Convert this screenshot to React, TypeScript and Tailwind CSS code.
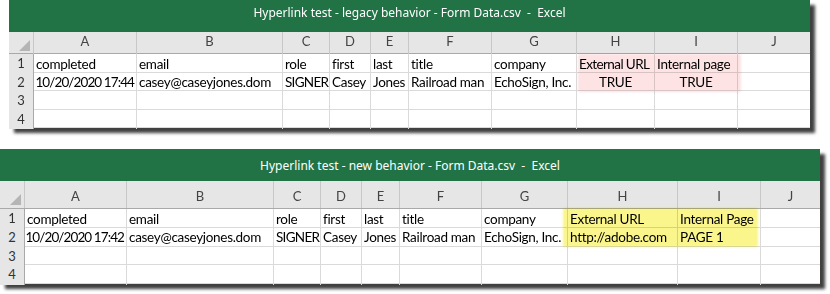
import React from 'react'

type Cell = { text?: string; align?: 'left' | 'right' | 'center'; track?: string }

type SheetProps = {
  title: string
  titleTop: string
  rowNumWidth: number
  widths: number[]
  headerClass: string
  rowHeight: number
  rows: Cell[][]
  highlight: { left: number; top: number; width: number; height: number; color: string }
  className: string
}

const LETTERS = ['A', 'B', 'C', 'D', 'E', 'F', 'G', 'H', 'I', 'J']

function SheetWindow({
  title,
  titleTop,
  rowNumWidth,
  widths,
  headerClass,
  rowHeight,
  rows,
  highlight,
  className,
}: SheetProps) {
  const cols = `${rowNumWidth}px ${widths.map((w) => `${w}px`).join(' ')} 1fr`

  return (
    <div className={`relative bg-white shadow-[5px_5px_3px_rgba(0,0,0,0.75)] ${className}`}>
      {/* title bar */}
      <div className={`h-[32px] bg-[#217346] flex justify-center text-white text-[12px] font-['Noto_Sans',sans-serif] whitespace-pre ${titleTop}`}>
        {title}
      </div>

      <div className="relative font-['Lato',sans-serif]">
        {/* column letters */}
        <div
          className={`grid bg-[#e6e6e6] border-b border-[#a9a9a9] text-[13px] text-[#444] ${headerClass}`}
          style={{ gridTemplateColumns: cols }}
        >
          <div className="relative border-r border-[#c8c8c8]">
            <svg className="absolute right-[3px] bottom-[3px]" width="11" height="11" viewBox="0 0 11 11">
              <path d="M11 0 L11 11 L0 11 Z" fill="#b5b5b5" />
            </svg>
          </div>
          {LETTERS.map((l) => (
            <div key={l} className="flex items-end justify-center pb-[2px] border-r border-[#c8c8c8] last:border-r-0">
              {l}
            </div>
          ))}
        </div>

        {/* rows */}
        {rows.map((row, r) => (
          <div
            key={r}
            className="grid text-[13.5px] text-black border-b border-[#dadada] last:border-b-0"
            style={{ gridTemplateColumns: cols, height: rowHeight }}
          >
            <div className="flex items-center justify-center bg-[#e6e6e6] border-r border-[#a9a9a9] text-[13px] text-[#333]">
              {r + 1}
            </div>
            {LETTERS.map((l, c) => {
              const cell = row[c] ?? {}
              const align =
                cell.align === 'right' ? 'justify-end' : cell.align === 'center' ? 'justify-center' : 'justify-start'
              return (
                <div
                  key={l}
                  className={`flex items-center ${align} px-[2px] border-r border-[#dadada] last:border-r-0 whitespace-nowrap overflow-hidden ${
                    cell.track ?? 'tracking-[-0.3px]'
                  }`}
                >
                  {cell.text}
                </div>
              )
            })}
          </div>
        ))}

        {/* highlighted cells */}
        <div
          className="absolute mix-blend-multiply rounded-[2px] blur-[1px]"
          style={{
            left: highlight.left,
            top: highlight.top,
            width: highlight.width,
            height: highlight.height,
            backgroundColor: highlight.color,
          }}
        />
      </div>
    </div>
  )
}

const baseRow = (date: string): Cell[] => [
  { text: date, align: 'right', track: 'tracking-[-0.9px]' },
  { text: 'casey@caseyjones.dom' },
  { text: 'SIGNER', track: 'tracking-[-0.7px]' },
  { text: 'Casey' },
  { text: 'Jones' },
  { text: 'Railroad man' },
  { text: 'EchoSign, Inc.' },
]

const header: Cell[] = [
  { text: 'completed' },
  { text: 'email' },
  { text: 'role' },
  { text: 'first' },
  { text: 'last' },
  { text: 'title' },
  { text: 'company' },
]

export default function App() {
  return (
    <div className="w-[830px] h-[294px] bg-white overflow-hidden flex flex-col">
      <SheetWindow
        className="ml-[9px] w-[801px] h-[128px]"
        title="Hyperlink test - legacy behavior - Form Data.csv  -  Excel"
        titleTop="pt-[4px]"
        rowNumWidth={25}
        widths={[103, 146, 47, 41, 38, 83, 85, 78, 83]}
        headerClass="h-[22px]"
        rowHeight={18.5}
        rows={[
          [...header, { text: 'External URL', track: 'tracking-[-0.6px]' }, { text: 'Internal page' }],
          [...baseRow('10/20/2020 17:44'), { text: 'TRUE', align: 'center' }, { text: 'TRUE', align: 'center' }],
          [],
          [],
        ]}
        highlight={{ left: 569, top: 22, width: 163, height: 38, color: '#fde3e3' }}
      />

      <SheetWindow
        className="mt-[21px] w-[820px] h-[135px]"
        title="Hyperlink test - new behavior - Form Data.csv  -  Excel"
        titleTop="pt-[8px]"
        rowNumWidth={25}
        widths={[102, 147, 47, 41, 38, 82, 86, 110, 83]}
        headerClass="h-[28px]"
        rowHeight={18.75}
        rows={[
          [...header, { text: 'External URL' }, { text: 'Internal Page' }],
          [...baseRow('10/20/2020 17:42'), { text: 'http://adobe.com' }, { text: 'PAGE 1' }],
          [],
          [],
        ]}
        highlight={{ left: 563, top: 27, width: 195, height: 39, color: '#fbf68c' }}
      />
    </div>
  )
}
